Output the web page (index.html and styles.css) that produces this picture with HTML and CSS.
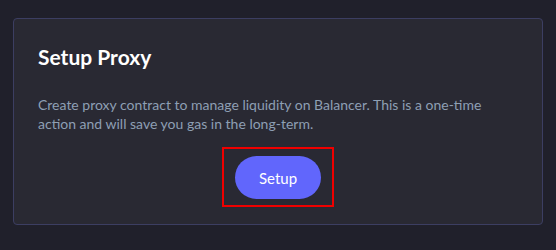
FILE: index.html
```html
<!DOCTYPE html>
<html>
<head>
<meta charset="utf-8">
<link rel="stylesheet" href="styles.css">
</head>
<body>
<div class="page">
  <section class="card">
    <h2 class="title">Setup Proxy</h2>
    <p class="desc">Create proxy contract to manage liquidity on Balancer. This is a one-time action and will save you gas in the long-term.</p>
    <div class="highlight">
      <button class="btn">Setup</button>
    </div>
  </section>
</div>
</body>
</html>
```
FILE: styles.css
```css
html, body {
  margin: 0;
  padding: 0;
  background: #20202b;
}
body {
  font-family: Lato, "Open Sans", sans-serif;
}
.page {
  padding: 18px 13px 0 13px;
}
.card {
  box-sizing: border-box;
  height: 207px;
  background: #292933;
  border: 1px solid #3c3e62;
  border-radius: 4px;
  padding: 24px 24px 0 24px;
  display: flex;
  flex-direction: column;
}
.title {
  margin: 0;
  font-size: 21px;
  line-height: 28px;
  font-weight: 700;
  color: #ffffff;
}
.desc {
  margin: 24px 0 0 0;
  font-size: 14px;
  line-height: 19px;
  color: #8e9fb4;
}
.highlight {
  align-self: center;
  margin-top: 14px;
  border: 2px solid #f00000;
  padding: 7px 11px 6px 11px;
}
.btn {
  display: block;
  width: 86px;
  height: 43px;
  border: none;
  border-radius: 22px;
  background: #6166fc;
  color: #ffffff;
  font-family: Lato, "Open Sans", sans-serif;
  font-size: 15px;
  padding: 0;
}
```
